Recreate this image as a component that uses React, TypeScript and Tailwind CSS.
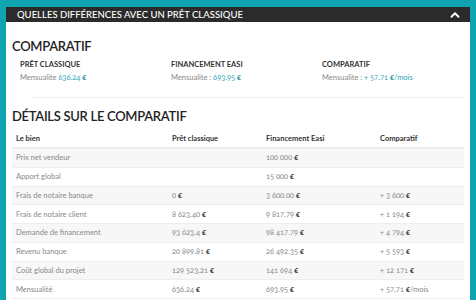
import React from 'react';
import { ChevronUp } from 'lucide-react';

const rows: [string, string, string, string][] = [
  ['Prix net vendeur', '', '100 000 ', ''],
  ['Apport global', '', '15 000 ', ''],
  ['Frais de notaire banque', '0 ', '3 600.00 ', '+ 3 600 '],
  ['Frais de notaire client', '8 623.40 ', '9 817.79 ', '+ 1 194 '],
  ['Demande de financement', '93 623.4 ', '98 417.79 ', '+ 4 794 '],
  ['Revenu banque', '20 899.81 ', '26 492.35 ', '+ 5 593 '],
  ['Coût global du projet', '129 523.21 ', '141 694 ', '+ 12 171 '],
  ['Mensualité', '636.24 ', '693.95 ', '+ 57.71 '],
];

const Money = ({ v, suffix }: { v: string; suffix?: string }) =>
  v ? (
    <span>
      {v}
      <b className="font-bold text-[#333]">€</b>
      {suffix}
    </span>
  ) : null;

const Summary = ({ title, label, value, suffix }: { title: string; label: string; value: string; suffix?: string }) => (
  <div>
    <p className="text-[7.5px] leading-[11px] font-bold uppercase text-[#333]">{title}</p>
    <p className="mt-[2px] text-[7.5px] leading-[11px] text-[#888]">
      {label}
      <span className="text-[#2aa3b5]">
        {value}
        <b className="font-bold text-[#1b8f9f]">€</b>
        {suffix}
      </span>
    </p>
  </div>
);

export default function App() {
  return (
    <div className="w-[476px] h-[300px] overflow-hidden bg-[#0fa4af] pt-[7px] px-[6px] font-['Lato',sans-serif] oldstyle-nums">
      <div className="h-[15px] bg-[#2b2b2b] flex items-center justify-between pl-[11px] pr-[8px]">
        <span className="text-white text-[9.5px] font-medium uppercase leading-none">
          Quelles différences avec un prêt classique
        </span>
        <ChevronUp className="text-white w-[14px] h-[14px]" strokeWidth={3.2} />
      </div>
      <div className="bg-white h-full pl-[6px] pr-[6px]">
        <h2 className="pt-[16px] text-[13px] font-semibold tracking-[-0.3px] text-[#222] leading-[16px] uppercase">
          Comparatif
        </h2>
        <div className="mt-[5px] grid grid-cols-[151px_151px_1fr] pl-[8px]">
          <Summary title="Prêt classique" label="Mensualite " value="636.24 " />
          <Summary title="Financement Easi" label="Mensualite : " value="693.95 " />
          <Summary title="Comparatif" label="Mensualite : " value="+ 57.71 " suffix="/mois" />
        </div>
        <div className="mt-[14px] ml-[20px] border-t border-[#eee]" />
        <h2 className="mt-[10px] text-[13px] font-semibold tracking-[-0.3px] text-[#222] leading-[16px] uppercase">
          Détails sur le comparatif
        </h2>
        <div className="mt-[6px] text-[7.5px]">
          <div className="grid grid-cols-[156px_94px_114px_1fr] h-[19px] items-center border-b-2 border-[#eee] font-bold text-[#333]">
            <span className="pl-[4px]">Le bien</span>
            <span className="pl-[4px]">Prêt classique</span>
            <span className="pl-[4px]">Financement Easi</span>
            <span className="pl-[4px]">Comparatif</span>
          </div>
          {rows.map((r, i) => (
            <div
              key={r[0]}
              className={`grid grid-cols-[156px_94px_114px_1fr] h-[18.75px] items-center border-b border-[#eee] text-[#888] ${
                i % 2 === 0 ? 'bg-[#f7f7f7]' : 'bg-white'
              }`}
            >
              <span className="pl-[4px]">{r[0]}</span>
              <span className="pl-[4px]"><Money v={r[1]} /></span>
              <span className="pl-[4px]"><Money v={r[2]} /></span>
              <span className="pl-[4px]"><Money v={r[3]} suffix={i === 7 ? '/mois' : undefined} /></span>
            </div>
          ))}
        </div>
      </div>
    </div>
  );
}
